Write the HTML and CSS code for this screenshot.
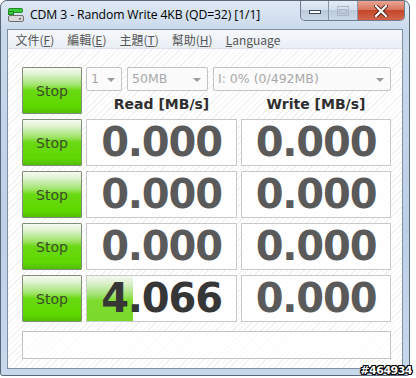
FILE: index.html
```html
<!DOCTYPE html>
<html lang="zh-Hant">
<head>
  <meta charset="UTF-8" />
  <title>CDM 3 - Random Write 4KB (QD=32) [1/1]</title>
  <link rel="stylesheet" href="styles.css">
</head>
<body>

<div class="window">
  <div class="titlebar">
    <svg class="app-icon" width="16" height="16" viewBox="0 0 16 16">
      <rect x="0.5" y="1.5" width="14" height="4" rx="1" fill="#3cc83c" stroke="#1f8a1f"/>
      <rect x="0.5" y="4.5" width="5" height="3" fill="#3cc83c" stroke="#1f8a1f"/>
      <rect x="0.5" y="8.5" width="15" height="6" rx="1.5" fill="#d8d8d8" stroke="#707070"/>
      <rect x="11" y="11" width="2" height="1.5" fill="#5a5a5a"/>
    </svg>
    <span class="title">CDM 3 - Random Write 4KB (QD=32) [1/1]</span>
    <div class="caption-buttons">
      <div class="cap-btn min">
        <svg width="14" height="6" viewBox="0 0 14 6"><rect x="1.5" y="1.5" width="11" height="3" fill="#fff" stroke="#3b4a5c"/></svg>
      </div>
      <div class="cap-btn max">
        <svg width="12" height="10" viewBox="0 0 12 10"><rect x="0.5" y="0.5" width="11" height="9" fill="none" stroke="#a9b6c4"/><rect x="2.5" y="3.5" width="7" height="4" fill="none" stroke="#a9b6c4"/></svg>
      </div>
      <div class="cap-btn close">
        <svg width="14" height="12" viewBox="0 0 14 12"><path d="M2 1 L12 11 M12 1 L2 11" stroke="#4a2018" stroke-width="4" stroke-linecap="square"/><path d="M2 1 L12 11 M12 1 L2 11" stroke="#fff" stroke-width="2.2" stroke-linecap="square"/></svg>
      </div>
    </div>
  </div>

  <div class="client">
    <div class="menubar">
      <span class="menu-item">文件(<u>F</u>)</span>
      <span class="menu-item">編輯(<u>E</u>)</span>
      <span class="menu-item">主題(<u>T</u>)</span>
      <span class="menu-item">幫助(<u>H</u>)</span>
      <span class="menu-item"><u>L</u>anguage</span>
    </div>

    <div class="panel">
      <div class="bench">
        <button class="stop">Stop</button>
        <div class="top">
          <div class="combos">
            <div class="combo c-count">1<span class="arrow"></span></div>
            <div class="combo c-size">50MB<span class="arrow"></span></div>
            <div class="combo c-drive">I: 0% (0/492MB)<span class="arrow"></span></div>
          </div>
          <div class="heads">
            <div class="head">Read [MB/s]</div>
            <div class="head">Write [MB/s]</div>
          </div>
        </div>

        <button class="stop">Stop</button>
        <div class="value">0.000</div>
        <div class="value">0.000</div>

        <button class="stop">Stop</button>
        <div class="value">0.000</div>
        <div class="value">0.000</div>

        <button class="stop">Stop</button>
        <div class="value">0.000</div>
        <div class="value">0.000</div>

        <button class="stop">Stop</button>
        <div class="value active"><div class="meter" style="width: 31%"></div><span>4.066</span></div>
        <div class="value">0.000</div>
      </div>
      <div class="status"></div>
    </div>
  </div>
</div>

<div class="watermark">#464934</div>

</body>
</html>
```

FILE: styles.css
```css
html, body {
  margin: 0;
  padding: 0;
}

body {
  width: 416px;
  height: 378px;
  background: #fff;
  position: relative;
  overflow: hidden;
  font-family: "DejaVu Sans", sans-serif;
}

.window {
  width: 410px;
  height: 376px;
  box-sizing: border-box;
  border: 1px solid #5b6878;
  border-radius: 7px 7px 3px 3px;
  background: linear-gradient(to bottom, #dfe9f5, #c9d9ec 30px, #bcd0e8 60%, #c7d8ec);
  padding: 0 6px 6px 6px;
  display: flex;
  flex-direction: column;
}

.titlebar {
  height: 28px;
  display: flex;
  align-items: flex-start;
  flex-shrink: 0;
}

.app-icon {
  margin: 6px 6px 0 1px;
}

.title {
  font-family: "Open Sans", sans-serif;
  font-size: 12.2px;
  color: #000;
  margin-top: 5px;
  letter-spacing: -0.1px;
}

.caption-buttons {
  margin-left: auto;
  margin-right: -2px;
  display: flex;
  height: 19px;
  border: 1px solid #6d7c8e;
  border-top: none;
  border-radius: 0 0 5px 5px;
  overflow: hidden;
}

.cap-btn {
  display: flex;
  align-items: center;
  justify-content: center;
  background: linear-gradient(to bottom, #e4ecf5, #d3dfec 45%, #bccbdc 50%, #c9d7e6);
}

.cap-btn.min {
  width: 27px;
  border-right: 1px solid #8797a9;
}

.cap-btn.min svg {
  margin-top: 3px;
}

.cap-btn.max {
  width: 28px;
  border-right: 1px solid #8797a9;
}

.cap-btn.close {
  width: 46px;
  background: linear-gradient(to bottom, #e8a493, #d9765f 45%, #c5452b 50%, #d2654a);
}

.client {
  flex: 1;
  border: 1px solid #7f8fa3;
  background: repeating-linear-gradient(135deg, #fff 0, #fff 3px, #f1f1f1 3px, #f1f1f1 4px);
  display: flex;
  flex-direction: column;
}

.menubar {
  height: 18px;
  background: linear-gradient(to bottom, #f6f8fb, #e9eef5);
  border-bottom: 1px solid #d9e0ea;
  display: flex;
  align-items: center;
  padding-left: 1px;
  font-family: "Noto Sans CJK TC", "Noto Sans", sans-serif;
  font-size: 12px;
  color: #555;
}

.menu-item {
  padding: 0 6.5px;
}

.menu-item u {
  text-decoration-thickness: 1px;
  text-underline-offset: 1px;
}

.panel {
  padding: 18px 0 0 14px;
  display: flex;
  flex-direction: column;
}

.bench {
  display: grid;
  grid-template-columns: 60px 151px 150px;
  grid-template-rows: repeat(5, 47px);
  column-gap: 4px;
  row-gap: 5px;
}

.stop {
  margin: 0;
  padding: 0;
  border: 1px solid #848c7c;
  border-radius: 1px;
  background: linear-gradient(to bottom, #f7faf4 0%, #dcf2cc 15%, #9fe46a 38%, #6ad912 50%, #5fd800 85%, #52c000 100%);
  font-family: "DejaVu Sans", sans-serif;
  font-size: 14px;
  color: #3b4d2a;
  padding-top: 1px;
}

.top {
  grid-column: 2 / 4;
  display: flex;
  flex-direction: column;
}

.combos {
  display: flex;
  gap: 5px;
  height: 24px;
}

.combo {
  position: relative;
  box-sizing: border-box;
  border: 1px solid #c3c3c3;
  border-radius: 2px;
  background: #fbfbfb;
  font-size: 12.5px;
  color: #a8a8a8;
  line-height: 22px;
  padding-left: 4px;
}

.c-count { width: 36px; }
.c-size { width: 81px; }
.c-drive { width: 178px; }

.arrow {
  position: absolute;
  right: 6px;
  top: 10px;
  width: 0;
  height: 0;
  border-left: 4px solid transparent;
  border-right: 4px solid transparent;
  border-top: 4px solid #9a9a9a;
}

.heads {
  display: flex;
  flex: 1;
  gap: 4px;
}

.head {
  flex: 1;
  text-align: center;
  font-weight: bold;
  font-size: 14px;
  color: #2e2e2e;
  padding-top: 5px;
}

.head + .head {
  flex: 0 0 150px;
}

.value {
  position: relative;
  box-sizing: border-box;
  border: 1px solid #c9c9c9;
  background: rgba(255, 255, 255, 0.75);
  display: flex;
  align-items: center;
  justify-content: center;
  font-weight: bold;
  font-size: 40px;
  letter-spacing: -1.2px;
  color: #5a5a5a;
  padding-bottom: 2px;
}

.value.active {
  color: #363636;
}

.value span {
  position: relative;
}

.meter {
  position: absolute;
  left: 0;
  top: 0;
  bottom: 0;
  background: linear-gradient(to bottom, #f5f8f1 0%, #d7efc6 18%, #a6e279 40%, #7ddc2e 55%, #7ad82a 100%);
}

.status {
  margin-top: 9px;
  width: 369px;
  height: 28px;
  box-sizing: border-box;
  border: 1px solid #c2c2c2;
  background: rgba(255, 255, 255, 0.7);
}

.watermark {
  position: absolute;
  right: 4px;
  bottom: 1px;
  font-family: "DejaVu Sans", sans-serif;
  font-weight: bold;
  font-size: 11px;
  color: #fff;
  letter-spacing: -0.5px;
  text-shadow: 1px 0 0 #000, -1px 0 0 #000, 0 1px 0 #000, 0 -1px 0 #000, 1px 1px 0 #000, -1px -1px 0 #000, 1px -1px 0 #000, -1px 1px 0 #000;
}
```
